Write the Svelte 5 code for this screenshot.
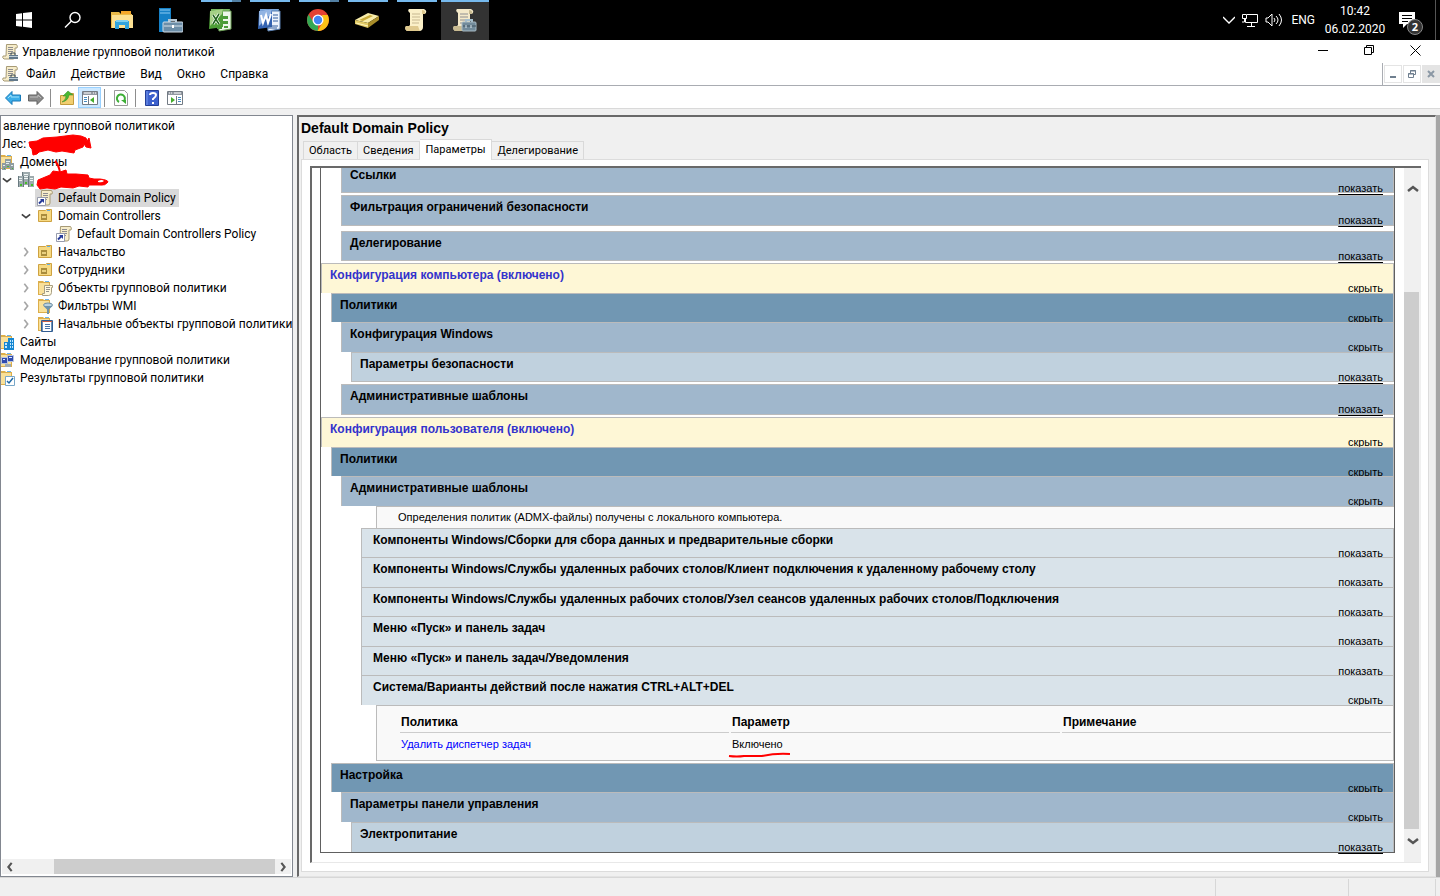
<script>
  let activeTab = $state("Параметры");
  let selected = $state("Default Domain Policy");

  const tasks = [
    { icon: "start", label: "Пуск" },
    { icon: "search", label: "Поиск" },
    { icon: "explorer", label: "Проводник" },
    { icon: "server", label: "Диспетчер серверов" },
    { icon: "excel", label: "Excel", open: true, multi: true },
    { icon: "word", label: "Word", open: true },
    { icon: "chrome", label: "Chrome", open: true, multi: true },
    { icon: "gold", label: "Сканер", open: true },
    { icon: "scroll", label: "Редактор", open: true },
    { icon: "gpm", label: "Управление групповой политикой", active: true },
  ];

  const menu = ["Файл", "Действие", "Вид", "Окно", "Справка"];
  const tabs = ["Область", "Сведения", "Параметры", "Делегирование"];

  const tree = [
    { level: 0, icon: "domains", text: "Домены" },
    { level: 1, icon: "domain", text: "", arrow: "open" },
    { level: 2, icon: "link", text: "Default Domain Policy" },
    { level: 2, icon: "ou", text: "Domain Controllers", arrow: "open" },
    { level: 3, icon: "link", text: "Default Domain Controllers Policy" },
    { level: 2, icon: "ou", text: "Начальство", arrow: "closed" },
    { level: 2, icon: "ou", text: "Сотрудники", arrow: "closed" },
    { level: 2, icon: "objects", text: "Объекты групповой политики", arrow: "closed" },
    { level: 2, icon: "filters", text: "Фильтры WMI", arrow: "closed" },
    { level: 2, icon: "starter", text: "Начальные объекты групповой политики", arrow: "closed" },
    { level: 0, icon: "sites", text: "Сайты" },
    { level: 0, icon: "modeling", text: "Моделирование групповой политики" },
    { level: 0, icon: "results", text: "Результаты групповой политики" },
  ];

  const components = [
    { text: "Компоненты Windows/Сборки для сбора данных и предварительные сборки", action: "показать" },
    { text: "Компоненты Windows/Службы удаленных рабочих столов/Клиент подключения к удаленному рабочему столу", action: "показать" },
    { text: "Компоненты Windows/Службы удаленных рабочих столов/Узел сеансов удаленных рабочих столов/Подключения", action: "показать" },
    { text: "Меню «Пуск» и панель задач", action: "показать" },
    { text: "Меню «Пуск» и панель задач/Уведомления", action: "показать" },
    { text: "Система/Варианты действий после нажатия CTRL+ALT+DEL", action: "скрыть" },
  ];
</script>

{#snippet folder()}
  <path d="M1 3V1h5l1 1h6v13H1z" fill="#dcae4b" />
  <path d="M2 3h10v11H2z" fill="#f9e099" />
  <path d="M8 1.500h4" stroke="#6fb4ea" />
{/snippet}

{#snippet paper()}
  <path d="M4.500 .5h10q1.500 1.500 .5 3.500h-2v9q0 2-2 2H2q-2-1-1-3h3z" fill="#f6ecc9" stroke="#a79a75" />
  <path d="M6 3.500h5M6 5.500h5M6 7.500h5M6 9.500h4" stroke="#8e8d91" />
{/snippet}

{#snippet icon(name)}
  {#if name === "start"}
    <svg width="16" height="16" viewBox="0 0 16 16" fill="#fff">
      <path d="M0 2l6-.8v6.3H0zM7 1l9-1v7.5H7zM0 8.500h6v6.300L0 14zM7 8.500h9V16l-9-1.200z" />
    </svg>
  {:else if name === "search"}
    <svg width="18" height="18" viewBox="0 0 18 18" fill="none" stroke="#fff" stroke-width="1.400">
      <circle cx="11" cy="6.500" r="5" /><path d="M7.500 10L1 16.500" />
    </svg>
  {:else if name === "explorer"}
    <svg width="22" height="20" viewBox="0 0 22 20">
      <path d="M0 2h8l2 2h11v14H0z" fill="#e9b948" /><path d="M10 1h10v3H10z" fill="#f4a62a" />
      <path d="M1 5h21v13H1z" fill="#fce092" /><path d="M4 11h14v8h-4v-4H8v4H4z" fill="#31a4dd" />
      <path d="M5 10h12v2H5z" fill="#7ed0ef" />
    </svg>
  {:else if name === "server"}
    <svg width="24" height="26" viewBox="0 0 24 26">
      <path d="M0 1h12v24H0z" fill="#1681c7" /><path d="M1 3h10M1 6h10" stroke="#8bcaf2" />
      <path d="M10 16V13h7v3" fill="none" stroke="#b6c7d4" stroke-width="2" />
      <rect x="4" y="15" width="20" height="10" rx="1" fill="#6c8ea8" stroke="#d2dee8" />
      <path d="M5 19h18" stroke="#d7e1e8" /><path d="M13 18h2v3h-2z" fill="#fff" />
    </svg>
  {:else if name === "excel"}
    <svg width="24" height="24" viewBox="0 0 24 24">
      <path d="M3 1h19l-1 4H3z" fill="#79ba62" /><path d="M9 3h14v18l-12 2z" fill="#edf6e9" stroke="#6a9e53" />
      <path d="M2 3l13-2v18L1 21z" fill="#4e9e37" /><path d="M2 3l13-2-1 5-12 12z" fill="#a5cf86" />
      <path d="M5 7l6 9M11 6l-6 10" stroke="#fff" stroke-width="3" /><path d="M5 7l6 9M11 6l-6 10" stroke="#21631c" stroke-width="1.500" />
      <path d="M15 8h5v3h-5zM15 13h5v3h-5zM9 18h5v3H9zM16 18h4v2h-4z" fill="#4b9b38" />
    </svg>
  {:else if name === "word"}
    <svg width="24" height="24" viewBox="0 0 24 24">
      <path d="M3 1h19l-1 4H3z" fill="#7ca9dc" /><path d="M9 3h14v18l-12 2z" fill="#edf3fb" stroke="#587eaf" />
      <path d="M2 3l13-2v18L1 21z" fill="#3363b2" /><path d="M2 3l13-2-1 5-12 12z" fill="#91b4e3" />
      <path d="M4 7l2 8 3-8 2 8 3-9" fill="none" stroke="#fff" stroke-width="2" /><path d="M16 7h5M16 10h5M16 13h5M10 18h11M10 20h10" stroke="#315c9c" />
    </svg>
  {:else if name === "chrome"}
    <svg width="22" height="22" viewBox="0 0 22 22">
      <circle cx="11" cy="11" r="11" fill="#e44234" /><path d="M1.500 5.500L7 14l4 2 0 6A11 11 0 0 1 1.500 5.500z" fill="#34a853" />
      <path d="M20.700 6A11 11 0 0 1 10.500 22L16 13l-1-7z" fill="#fbc116" />
      <circle cx="11" cy="11" r="5.500" fill="#fff" /><circle cx="11" cy="11" r="4.200" fill="#4285f4" />
    </svg>
  {:else if name === "gold"}
    <svg width="24" height="16" viewBox="0 0 24 16">
      <path d="M0 8L13 1l11 3-11 7z" fill="#f8edaa" /><path d="M0 8l13 3v5L0 12z" fill="#e1ca65" />
      <path d="M13 11l11-7v4l-11 8z" fill="#a98d2a" /><path d="M4 8L15 3l3 1L8 9z" fill="#c9ab3a" /><path d="M1 11l12 3" stroke="#fff6be" />
    </svg>
  {:else if name === "scroll"}
    <svg width="22" height="24" viewBox="0 0 22 24">
      <path d="M4 1h15q4 2 1 5h-2v13q0 3-3 4H2q-3-2-1-5h3l1-1V5Q2 3 4 1z" fill="#fbf0c8" /><path d="M17 2q4 0 3 4h-3zM1 18h12q1 3 2 5H2q-3-2-1-5z" fill="#dfc98e" />
      <path d="M7 6h8M7 9h8M7 12h8M7 15h7" stroke="#c7b891" />
    </svg>
  {:else if name === "gpm"}
    <svg width="24" height="24" viewBox="0 0 24 24">
      <path d="M4 1h14q4 2 1 5h-2v13q0 3-3 4H2q-3-2-1-5h3l1-1V5Q2 3 4 1z" fill="#f4e9c9" /><path d="M16 2q4 0 3 4h-3zM1 18h10v5H2q-3-2-1-5z" fill="#c9bb91" />
      <path d="M7 6h8M7 9h8M7 12h8M7 15h5" stroke="#8e8e91" />
      <path d="M13 15v-3h6v3" fill="none" stroke="#a4bdcc" stroke-width="2" /><rect x="9" y="14" width="14" height="9" rx="1" fill="#728b9b" stroke="#a8bac4" />
      <path d="M10 18h13" stroke="#3e5361" /><path d="M13 17v3M18 17v3" stroke="#dce8ef" />
    </svg>
  {:else if name === "app"}
    <svg width="16" height="16" viewBox="0 0 16 16">
      {@render paper()}
      <path d="M9 11V9h4v2" fill="none" stroke="#43535e" /><path d="M7 11h9v4H7z" fill="#61788a" /><path d="M7 12.500h9" stroke="#bfced8" />
    </svg>
  {:else if name === "back" || name === "forward"}
    <svg class:flip={name === "forward"} width="16" height="14" viewBox="0 0 16 14">
      <path d="M.5 7L7 .5v3.500h8.500v6H7v3.500z" fill={name === "back" ? "#3caee9" : "#8a8a8a"} stroke={name === "back" ? "#1879b7" : "#636363"} />
      <path d="M3 7l3-3v2h8" fill="none" stroke={name === "back" ? "#a0e1fa" : "#bbb"} />
    </svg>
  {:else if name === "up"}
    <svg width="16" height="16" viewBox="0 0 16 16">
      <path d="M1.500 5.500h6l2-2h5v11h-13z" fill="#f1ce70" stroke="#c39b3c" /><path d="M3 12Q7 10 7 6H4l5-5 5 4h-4q-1 6-7 7z" fill="#49b832" stroke="#2f8724" stroke-width=".5" />
    </svg>
  {:else if name === "pane" || name === "action"}
    <svg class:flip={name === "action"} width="16" height="14" viewBox="0 0 16 14">
      <path d="M.5.5h15v13H.5z" fill="#fff" stroke="#737b84" /><path d="M1 1h14v3H1z" fill="#9299a2" /><path d="M2 2h7M11 2h1M13 2h1" stroke="#fff" />
      <path d="M6.500 5v9" stroke="#737b84" /><path d="M2 6.500h3M2 8.500h3M2 10.500h3" stroke="#478cc1" /><path d="M12 6v6L8 9z" fill="#45ac2d" />
    </svg>
  {:else if name === "refresh"}
    <svg width="14" height="16" viewBox="0 0 14 16">
      <path d="M.5.5h10l3 3v12H.5z" fill="#fff" stroke="#9a9a9a" /><path d="M5 12a4 4 0 1 1 5-1" fill="none" stroke="#3eaf36" stroke-width="2" /><path d="M7 10h5v4z" fill="#3eaf36" />
    </svg>
  {:else if name === "help"}
    <svg width="14" height="16" viewBox="0 0 14 16">
      <path d="M.5.5h13v15H.5z" fill="#3d61cd" stroke="#243f97" /><path d="M2 1v14" stroke="#7698ed" />
      <path d="M5 5q0-2 3-2t3 2-3 4v1M8 12v2" fill="none" stroke="#fff" stroke-width="2" />
    </svg>
  {:else}
    <svg width="16" height="16" viewBox="0 0 16 16">
      {#if name === "link"}
        {@render paper()}
        <path d="M.5 7.500h8v8h-8z" fill="#fff" stroke="#969bad" /><path d="M2 13.500l3.500-3.500" stroke="#263b99" stroke-width="2" /><path d="M3 9h4v4z" fill="#263b99" />
      {:else if name === "domain"}
        <path d="M4 0h8v13H4zM0 4h5v11H0zM11 4h5v11h-5z" fill="#9eabae" />
        <path d="M6 2.500h4M6 4.500h4M6 6.500h4M1 6.500h3M1 8.500h3M12 6.500h3M12 8.500h3" stroke="#eff5f4" /><path d="M7 11h2M2 13h2M13 13h2" stroke="#45bd28" stroke-width="2" />
        <path d="M4.500 0v4M5.500 4v11M10.500 4v11M.5 4v11" stroke="#697a80" />
      {:else if name === "ou"}
        <path d="M1.500 2.500h7l1-1h5v12h-13z" fill="#f6d982" stroke="#cea241" /><path d="M10 2.500h3" stroke="#65aee5" />
        <path d="M4 6h6v6H4z" fill="#a98c3c" /><path d="M5 8h4v2H5z" fill="#e9d080" />
      {:else}
        {@render folder()}
        {#if name === "domains"}
          <path d="M6 5h6v9H6zM3 9h4v7H3zM11 9h4v7h-4z" fill="#8f9c9f" /><path d="M7 7.500h4M7 9.500h3M4 11.500h2M12 11.500h2" stroke="#e5eeee" /><path d="M8 12.500h2M5 14.500h1M13 14.500h1" stroke="#4cb439" />
        {:else if name === "objects"}
          <path d="M7.500 5.500h8v2h-1v5q0 3-3 3h-6v-2h2z" fill="#fff9df" stroke="#a79d81" /><path d="M9 7.500h4M9 9.500h4M9 11.500h3" stroke="#93918a" />
        {:else if name === "filters"}
          <ellipse cx="11" cy="7" rx="4.500" ry="2" fill="#bad2e0" stroke="#6c8ca2" /><path d="M6.500 8h9L12 11.500V16h-2v-4.500z" fill="#6e92ab" />
        {:else if name === "starter"}
          <path d="M4.500 4.500h11v11h-11z" fill="#fff" stroke="#315c91" /><path d="M5 5.500h10" stroke="#c96143" /><path d="M5.500 6v9M14.500 6v9" stroke="#6b93bb" /><path d="M8 8.500h5M8 10.500h5M8 12.500h5" stroke="#4775a6" />
        {:else if name === "sites"}
          <path d="M5 8h5v8H5zM9 4h6v12H9z" fill="#1586d1" /><path d="M6 10h2M6 13h2M11 7h1M13 7h1M11 10h1M13 10h1M11 13h1M13 13h1" stroke="#bfe6ff" stroke-width="2" />
        {:else if name === "modeling"}
          <path d="M2.500 5.500h6v6h-6zM8.500 3.500h6v6h-6z" fill="#304baf" stroke="#bac5dd" /><path d="M6 12h6v3H6z" fill="#9fabb6" /><path d="M10 5.500h3M4 7.500h2" stroke="#dceaff" />
        {:else if name === "results"}
          <path d="M6.500 6.500h9v9h-9z" fill="#fff" stroke="#78a7c9" /><path d="M8 11l2 2 4-5" fill="none" stroke="#1f68a5" stroke-width="1.500" />
        {/if}
      {/if}
    </svg>
  {/if}
{/snippet}

{#snippet chevron(dir)}
  <svg class="chevron {dir}" width="12" height="8" viewBox="0 0 12 8" fill="none" stroke-width="2.500" aria-hidden="true">
    <path d="M1 6l5-4 5 4" />
  </svg>
{/snippet}

{#snippet section(kind, text, action)}
  <div class="section {kind}">
    <h3>{text}</h3>
    <button>{action}</button>
  </div>
{/snippet}

<div class="screen">
  <header class="taskbar">
    <nav class="tasks">
      {#each tasks as task}
        <button class="task" class:active={task.active} class:open={task.open} class:multi={task.multi} aria-label={task.label}>
          {@render icon(task.icon)}
        </button>
      {/each}
    </nav>
    <div class="tray">
      <svg width="12" height="8" viewBox="0 0 12 8" fill="none" stroke="#fff" stroke-width="1.300"><path d="M0 1l6 6 6-6" /></svg>
      <svg width="18" height="14" viewBox="0 0 18 14" fill="none" stroke="#fff">
        <path d="M6 1.500h10.500v8H4.500V6M10.500 10v3M6 13.500h8M1.500 1.500h4v4h-4zM3.500 6v3H1" />
      </svg>
      <svg width="18" height="14" viewBox="0 0 18 14" fill="none" stroke="#fff">
        <path d="M1 5h2l4-4v12L3 9H1zM9 5q2 2 0 4M11 3q4 4 0 8M14 1q5 6 0 12" />
      </svg>
      <span>ENG</span>
      <div class="clock"><span>10:42</span><span>06.02.2020</span></div>
      <button class="notice" aria-label="Уведомления">
        <svg width="17" height="16" viewBox="0 0 17 16"><path d="M0 0h16v12H8l-4 4v-4H0z" fill="#fff" /><path d="M3 3.500h10M3 6.500h10M3 9.500h6" stroke="#000" /></svg>
        <span class="badge">2</span>
      </button>
    </div>
  </header>

  <div class="titlebar">
    {@render icon("app")}
    <h1>Управление групповой политикой</h1>
    <div class="window-buttons">
      <button aria-label="Свернуть"><svg width="11" height="11" stroke="#000"><path d="M0 5.500h10" /></svg></button>
      <button aria-label="Восстановить"><svg width="11" height="11" fill="none" stroke="#000"><path d="M.5 2.500h7v7h-7zM2.500 2V.500h7v7H8" /></svg></button>
      <button aria-label="Закрыть"><svg width="11" height="11" stroke="#000"><path d="M.5.500l10 10M10.500.500l-10 10" /></svg></button>
    </div>
  </div>

  <div class="menubar">
    {@render icon("app")}
    <nav>
      {#each menu as item}
        <button>{item}</button>
      {/each}
    </nav>
    <div class="child-buttons">
      <button aria-label="Свернуть окно"><svg width="8" height="8" stroke="#6f7f8f" stroke-width="2"><path d="M1 7h6" /></svg></button>
      <button aria-label="Восстановить окно"><svg width="8" height="8" fill="none" stroke="#6f7f8f"><path d="M.5 3.500h5v4h-5zM0 4h6M2.500 3V.500h5v4H6M2 1h6" /></svg></button>
      <button class="grey" aria-label="Закрыть окно"><svg width="8" height="8" stroke="#8b98a5" stroke-width="2"><path d="M1 1l6 6M7 1L1 7" /></svg></button>
    </div>
  </div>

  <div class="toolbar">
    <button aria-label="Назад">{@render icon("back")}</button>
    <button aria-label="Вперед">{@render icon("forward")}</button>
    <i></i>
    <button aria-label="Вверх">{@render icon("up")}</button>
    <button class="on" aria-label="Дерево консоли">{@render icon("pane")}</button>
    <i></i>
    <button aria-label="Обновить">{@render icon("refresh")}</button>
    <i></i>
    <button aria-label="Справка">{@render icon("help")}</button>
    <button aria-label="Панель действий">{@render icon("action")}</button>
  </div>

  <div class="workspace">
    <aside class="tree">
      <ul>
        <li class="plain">авление групповой политикой</li>
        <li class="plain forest">Лес:</li>
        {#each tree as node}
          <li style:padding-left="{node.level * 19}px">
            <span class="expander">
              {#if node.arrow}{@render chevron(node.arrow)}{/if}
            </span>
            <button class="node" class:selected={node.text === selected} aria-label={node.text || "Домен"} onclick={() => (selected = node.text)}>
              {@render icon(node.icon)}
              <span>{node.text}</span>
            </button>
          </li>
        {/each}
      </ul>
      <svg class="scribble" width="110" height="60" viewBox="0 0 110 60" fill="red" stroke="red" stroke-linejoin="round" aria-hidden="true">
        <path d="M28 8l8-1 6-3 14-1 16-2 8 1 5 2 1 3 2-3 2 10-5-1-2-3-1 3-8 3-1 3-12-2-6 1-8-2-9 2-2 2-4 1-1-6-2-2z" />
        <path d="M37 46l12-5 3-4 7 1 6-2 1 4 9 0 12 1 1 3 5 1 6 0q8 1 8 3-3 4-8 3l-11 0-1 2-9-1-6 2-12-1-6 2-8-1-7 1-3-4z" />
        <path d="M97 47q4-2 6 0-2 2-6 1z" fill="#fff" stroke="none" />
        <path d="M54 27q4 4 5 12" fill="none" stroke-width="2" />
      </svg>
      <div class="hscroll">
        {@render chevron("left")}
        <div class="track"><div class="thumb"></div></div>
        {@render chevron("right")}
      </div>
    </aside>

    <main>
      <h2>Default Domain Policy</h2>
      <div class="tabs" role="tablist">
        {#each tabs as tab}
          <button role="tab" aria-selected={tab === activeTab} class:current={tab === activeTab} onclick={() => (activeTab = tab)}>{tab}</button>
        {/each}
      </div>
      <div class="tab-page">
        <div class="viewport">
          <div class="report">
            {@render section("level2 first", "Ссылки", "показать")}
            {@render section("level2 filter", "Фильтрация ограничений безопасности", "показать")}
            {@render section("level2 closed", "Делегирование", "показать")}
            {@render section("level0", "Конфигурация компьютера (включено)", "скрыть")}
            {@render section("level1", "Политики", "скрыть")}
            {@render section("level2", "Конфигурация Windows", "скрыть")}
            {@render section("level3 closed", "Параметры безопасности", "показать")}
            {@render section("level2 closed", "Административные шаблоны", "показать")}
            {@render section("level0", "Конфигурация пользователя (включено)", "скрыть")}
            {@render section("level1", "Политики", "скрыть")}
            {@render section("level2", "Административные шаблоны", "скрыть")}
            <p class="info">Определения политик (ADMX-файлы) получены с локального компьютера.</p>
            <div class="components">
              {#each components as item}
                {@render section("level4", item.text, item.action)}
              {/each}
            </div>
            <div class="settings">
              <table>
                <thead>
                  <tr><th>Политика</th><th>Параметр</th><th>Примечание</th></tr>
                </thead>
                <tbody>
                  <tr>
                    <td><a href="#policy">Удалить диспетчер задач</a></td>
                    <td>
                      <span class="marked">
                        Включено
                        <svg width="64" height="6" viewBox="0 0 64 6" fill="none" stroke="red" stroke-width="2" aria-hidden="true"><path d="M1 4q8 1 15 0h18Q48 1 62 2" /></svg>
                      </span>
                    </td>
                    <td></td>
                  </tr>
                </tbody>
              </table>
            </div>
            {@render section("level1", "Настройка", "скрыть")}
            {@render section("level2", "Параметры панели управления", "скрыть")}
            {@render section("level3", "Электропитание", "показать")}
          </div>
          <div class="vscroll">
            {@render chevron("up")}
            <div class="track"><div class="thumb"></div></div>
            {@render chevron("down")}
          </div>
        </div>
      </div>
    </main>
    <div class="edge"></div>
  </div>

  <footer><span></span><span></span><span></span></footer>
</div>

<style>
  :global(body) {
    margin: 0;
  }

  .screen {
    height: 100vh;
    display: flex;
    flex-direction: column;
    overflow: hidden;
    background: #f0f0f0;
    color: #000;
    font: 12px/18px Roboto, "Noto Sans", sans-serif;
  }

  button {
    border: 0;
    padding: 0;
    margin: 0;
    background: none;
    color: inherit;
    font: inherit;
  }

  svg {
    flex: none;
    display: block;
  }

  ul {
    list-style: none;
    padding: 0;
    margin: 0;
  }

  h1,
  h2,
  h3,
  p {
    margin: 0;
    font-size: inherit;
    font-weight: inherit;
  }

  .flip {
    transform: scaleX(-1);
  }

  .taskbar {
    flex: none;
    height: 40px;
    display: flex;
    justify-content: space-between;
    background: #000;
    color: #fff;
  }

  .tasks {
    display: flex;
    gap: 1px;
  }

  .task {
    position: relative;
    width: 48px;
    display: flex;
    align-items: center;
    justify-content: center;
  }

  .task.active {
    background: #333;
  }

  .task.open::before,
  .task.active::before {
    content: "";
    position: absolute;
    top: 0;
    left: 5px;
    right: 3px;
    height: 2px;
    background: #76b9ed;
  }

  .task.active::before {
    left: 0;
    right: 0;
  }

  .task.multi::before {
    background: linear-gradient(to right, #76b9ed 78%, #527fa3 78%);
  }

  .tray {
    display: flex;
    align-items: center;
    gap: 8px;
    margin-right: 4px;
    padding-right: 12px;
    border-right: 1px solid #555;
  }

  .tray > svg + svg {
    margin-left: -2px;
  }

  .clock {
    display: flex;
    flex-direction: column;
    align-items: center;
    width: 64px;
  }

  .notice {
    position: relative;
    margin-left: 4px;
    width: 24px;
  }

  .badge {
    position: absolute;
    left: 8px;
    top: 7px;
    width: 14px;
    height: 14px;
    border: 1px solid #888;
    border-radius: 50%;
    background: #333;
    font: bold 11px/14px "Open Sans", sans-serif;
    text-align: center;
  }

  .titlebar,
  .menubar,
  .toolbar {
    flex: none;
    display: flex;
    align-items: center;
    background: #fff;
  }

  .titlebar {
    height: 23px;
    padding-left: 2px;
    gap: 4px;
  }

  .window-buttons {
    display: flex;
    align-self: flex-start;
    margin-left: auto;
    margin-right: 2px;
  }

  .window-buttons button {
    display: flex;
    justify-content: center;
    align-items: center;
    width: 46px;
    height: 20px;
  }

  .menubar {
    height: 22px;
    padding-left: 2px;
    border-bottom: 1px solid #a9acb2;
  }

  .menubar nav {
    display: flex;
    gap: 15px;
    margin-left: 8px;
  }

  .child-buttons {
    display: flex;
    gap: 1px;
    margin-left: auto;
    align-self: stretch;
    align-items: center;
    border-left: 1px solid #a9acb2;
    padding-left: 1px;
  }

  .child-buttons button {
    width: 18px;
    height: 18px;
    display: flex;
    align-items: center;
    justify-content: center;
    border: 1px solid #e4e4e4;
  }

  .child-buttons .grey {
    background: #e4e4e4;
  }

  .toolbar {
    height: 21px;
    padding: 1px 0 0 1px;
    border-bottom: 1px solid #d9d9d9;
  }

  .toolbar button {
    width: 23px;
    height: 21px;
    display: flex;
    align-items: center;
    justify-content: center;
  }

  .toolbar .on {
    background: #cce8ff;
    box-shadow: inset 0 0 0 1px #99d1ff;
  }

  .toolbar i {
    width: 1px;
    height: 18px;
    margin: 0 4px 0 3px;
    background: #8d8d8d;
  }

  .workspace {
    flex: 1;
    min-height: 0;
    display: flex;
    padding-top: 6px;
  }

  .tree {
    position: relative;
    flex: none;
    box-sizing: border-box;
    width: 293px;
    display: flex;
    flex-direction: column;
    justify-content: space-between;
    overflow: hidden;
    border: 1px solid #828790;
    background: #fff;
  }

  .tree ul {
    margin: 1px 0 0 -22px;
  }

  .tree li {
    display: flex;
    height: 18px;
    white-space: nowrap;
  }

  .tree .plain {
    padding-left: 24px;
  }

  .tree .forest {
    padding-left: 23px;
  }

  .expander {
    flex: none;
    width: 18px;
    display: flex;
    align-items: center;
    justify-content: center;
  }

  .node {
    display: flex;
    align-items: center;
    gap: 2px;
    padding: 0 0 0 2px;
  }

  .node span {
    padding: 0 3px;
  }

  .node.selected {
    background: #d9d9d9;
  }

  .chevron {
    stroke: #555;
  }

  .chevron.open {
    width: 10px;
    stroke: #404040;
    stroke-width: 2px;
    transform: rotate(180deg);
  }

  .chevron.closed {
    width: 10px;
    stroke: #a6a6a6;
    stroke-width: 2px;
    transform: rotate(90deg);
  }

  .chevron.down {
    transform: rotate(180deg);
  }

  .chevron.left,
  .chevron.right {
    width: 10px;
    transform: rotate(-90deg);
  }

  .chevron.right {
    transform: rotate(90deg);
  }

  .scribble {
    position: absolute;
    left: 0;
    top: 18px;
  }

  .hscroll {
    display: flex;
    align-items: center;
    gap: 3px;
    height: 15px;
    margin: 0 1px 2px;
    padding: 0 3px;
    background: #f0f0f0;
  }

  .track {
    flex: 1;
    align-self: stretch;
  }

  .thumb {
    background: #cdcdcd;
  }

  .hscroll .thumb {
    height: 100%;
    width: 86%;
    margin-left: auto;
  }

  main {
    flex: 1;
    min-width: 0;
    display: flex;
    flex-direction: column;
    margin-left: 4px;
    border: 1px solid #e3e3e3;
    border-top: 2px solid #696969;
    border-left: 2px solid #696969;
    padding: 0 6px 4px 2px;
  }

  h2 {
    font: bold 14px/22px "Liberation Sans", Arial, sans-serif;
  }

  .tabs {
    display: flex;
    align-items: flex-end;
    height: 20px;
    margin-left: 2px;
    font-size: 11px;
  }

  .tabs button {
    height: 18px;
    line-height: 18px;
    padding: 0 5px;
    border: 1px solid #d9d9d9;
    border-bottom: 0;
    border-left-width: 0;
  }

  .tabs button:first-child {
    border-left-width: 1px;
  }

  .tabs .current {
    position: relative;
    height: 21px;
    margin-bottom: -1px;
    padding: 0 6px;
    background: #fff;
  }

  .tab-page {
    flex: 1;
    min-height: 0;
    display: flex;
    padding: 6px 7px 8px 8px;
    border: 1px solid #dcdcdc;
    background: #fff;
  }

  .viewport {
    flex: 1;
    min-width: 0;
    display: flex;
    overflow: hidden;
    border-top: 2px solid #696969;
    border-left: 2px solid #696969;
    border-bottom: 1px solid #e8e8e8;
  }

  .report {
    flex: 1;
    min-width: 0;
    align-self: flex-start;
    margin: -5px 9px 0 8px;
    border: 1px solid #606060;
    border-top: 0;
    font: 11px/14px "Liberation Sans", Arial, sans-serif;
  }

  .section {
    position: relative;
    box-sizing: border-box;
    height: 30px;
    display: flex;
    justify-content: space-between;
    border: 1px solid #bbb;
    border-bottom: 0;
    padding: 0 10px 0 8px;
  }

  .section h3 {
    font-size: 12px;
    font-weight: bold;
    line-height: 22px;
    white-space: nowrap;
  }

  .section button {
    align-self: flex-start;
    margin-top: 17px;
    line-height: 14px;
    text-decoration: underline;
    text-underline-offset: 2px;
  }

  .level0 {
    background: #fef7d6;
  }

  .level0 h3 {
    color: #3333cc;
  }

  .level1 {
    height: 29px;
    margin-left: 10px;
    background: #7197b3;
  }

  .level2 {
    margin-left: 20px;
    background: #a0b7cc;
  }

  .level3 {
    margin-left: 30px;
    background: #c0d1de;
  }

  .level4 {
    height: 29px;
    padding-left: 11px;
    background: #d9e3ea;
  }

  .level4:nth-child(even) {
    height: 30px;
  }

  .section.first,
  .section.filter,
  .section.closed {
    border-bottom: 1px solid #bbb;
    margin-bottom: 2px;
  }

  .section.filter {
    height: 31px;
    margin-bottom: 5px;
  }

  .level3.closed + .closed {
    height: 31px;
  }

  .info {
    position: relative;
    margin-left: 55px;
    padding: 4px 0 4px 21px;
    border-left: 1px solid #bbb;
    border-top: 1px solid #bbb;
    background: #f9f9f9;
    line-height: 13px;
  }

  .components {
    margin-left: 40px;
  }

  .settings {
    position: relative;
    margin: 0 0 2px 55px;
    padding: 5px 0 4px 21px;
    border: 1px solid #bbb;
    background: #f9f9f9;
  }

  table {
    width: 100%;
    table-layout: fixed;
    border-spacing: 2px;
  }

  th,
  td {
    padding: 2px 1px 3px;
    text-align: left;
  }

  th {
    border-bottom: 1px solid #ccc;
    font-size: 12px;
  }

  a {
    color: #0000ff;
    text-decoration: none;
  }

  .marked {
    position: relative;
  }

  .marked svg {
    position: absolute;
    left: -4px;
    top: 14px;
  }

  .vscroll {
    flex: none;
    width: 17px;
    display: flex;
    flex-direction: column;
    align-items: center;
    padding: 17px 0;
    background: #f0f0f0;
  }

  .vscroll .track {
    width: 15px;
    display: flex;
  }

  .vscroll .thumb {
    flex: 1;
    margin: 99px 0 8px;
  }

  .edge {
    width: 4px;
    background: #a6a6a6;
  }

  footer {
    flex: none;
    display: flex;
    justify-content: flex-end;
    height: 18px;
    border-top: 1px solid #d7d7d7;
    padding-right: 4px;
  }

  footer span {
    width: 132px;
    border-left: 1px solid #d7d7d7;
    margin-top: 1px;
  }

  footer span:nth-child(2) {
    width: 86px;
  }

  footer span:last-child {
    width: 0;
  }
</style>
